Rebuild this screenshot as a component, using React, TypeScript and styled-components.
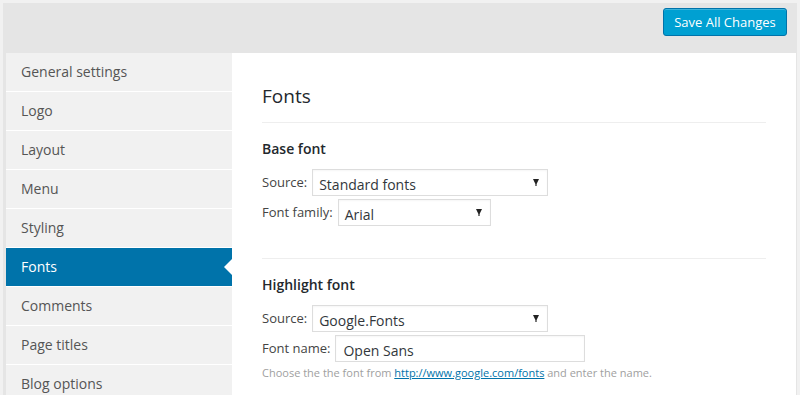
import React from "react";
import styled, { createGlobalStyle } from "styled-components";

const Global = createGlobalStyle`
  html, body { margin: 0; padding: 0; background: #f1f1f1; }
  body { font-family: "Open Sans", "Noto Sans", sans-serif; color: #444; }
  * { box-sizing: border-box; }
`;

const Frame = styled.div`
  margin: 3px 0 0 3px;
  width: 794px;
  background: #e5e5e5;
  display: flex;
  flex-direction: column;
`;

const TopBar = styled.div`
  height: 50px;
  display: flex;
  justify-content: flex-end;
  align-items: flex-start;
  padding: 5px 10px 0 0;
`;

const SaveButton = styled.button`
  height: 28px;
  width: 124px;
  padding: 0;
  background: #00a0d2;
  border: 1px solid #0073aa;
  border-radius: 3px;
  color: #fff;
  font-family: "Open Sans", sans-serif;
  font-size: 13px;
  line-height: 26px;
  box-shadow: inset 0 1px 0 rgba(120, 200, 230, 0.5);
  cursor: pointer;
`;

const Body = styled.div`
  display: flex;
  padding-left: 3px;
  padding-right: 1px;
  height: 342px;
`;

const Sidebar = styled.nav`
  width: 226px;
  background: #f1f1f1;
  display: flex;
  flex-direction: column;
`;

const NavItem = styled.div<{ $active?: boolean }>`
  position: relative;
  height: 39px;
  line-height: 38px;
  padding-left: 15px;
  font-size: 14px;
  border-bottom: 1px solid #fff;
  color: ${(p) => (p.$active ? "#fff" : "#555")};
  background: ${(p) => (p.$active ? "#0073aa" : "#f1f1f1")};
  ${(p) =>
    p.$active &&
    `
    &::after {
      content: "";
      position: absolute;
      right: 0;
      top: 11px;
      border-style: solid;
      border-width: 8px 8px 8px 0;
      border-color: transparent #fff transparent transparent;
    }
  `}
`;

const Content = styled.main`
  flex: 1;
  background: #fff;
  padding: 30px 30px 0 30px;
  overflow: hidden;
`;

const Title = styled.h2`
  margin: 0;
  font-size: 19px;
  font-weight: 400;
  line-height: 27px;
  color: #23282d;
  padding-bottom: 12px;
  border-bottom: 1px solid #eee;
`;

const Section = styled.section<{ $last?: boolean }>`
  padding: 16px 0 ${(p) => (p.$last ? "0" : "29px")};
  border-bottom: ${(p) => (p.$last ? "none" : "1px solid #eee")};
`;

const SectionTitle = styled.h3`
  margin: 0 0 11px;
  font-size: 14px;
  font-weight: 600;
  line-height: 19px;
  color: #23282d;
`;

const Row = styled.div`
  display: flex;
  align-items: flex-start;
  gap: 5px;
  margin-bottom: 3px;
`;

const Label = styled.label`
  font-size: 13px;
  line-height: 18px;
  padding-top: 4px;
  color: #444;
`;

const SelectBox = styled.div<{ $w: number }>`
  width: ${(p) => p.$w}px;
  height: 27px;
  border: 1px solid #ddd;
  display: flex;
  align-items: center;
  justify-content: space-between;
  padding: 0 8px 0 6px;
  font-size: 14px;
  color: #32373c;
  background: #fff;
  box-shadow: inset 0 1px 2px rgba(0, 0, 0, 0.04);
`;

const SelectText = styled.span`
  padding-top: 3px;
`;

const Arrow = styled.svg`
  width: 6px;
  height: 7px;
  display: block;
`;

const TextInput = styled.div`
  width: 250px;
  height: 27px;
  border: 1px solid #ddd;
  display: flex;
  align-items: center;
  padding: 3px 7px 0;
  font-size: 14px;
  color: #32373c;
  box-shadow: inset 0 1px 2px rgba(0, 0, 0, 0.04);
`;

const Hint = styled.p`
  margin: 2px 0 0;
  font-size: 11px;
  line-height: 15px;
  color: #a0a0a0;
`;

const Link = styled.a`
  color: #0073aa;
  text-decoration: underline;
`;

const Select = ({ w, value }: { w: number; value: string }) => (
  <SelectBox $w={w}>
    <SelectText>{value}</SelectText>
    <Arrow viewBox="0 0 6 7">
      <path d="M0 0 H6 L3.6 5 V7 H2.4 V5 Z" fill="#222" />
    </Arrow>
  </SelectBox>
);

const items = [
  "General settings",
  "Logo",
  "Layout",
  "Menu",
  "Styling",
  "Fonts",
  "Comments",
  "Page titles",
  "Blog options",
];

export default function App() {
  return (
    <>
      <Global />
      <Frame>
        <TopBar>
          <SaveButton>Save All Changes</SaveButton>
        </TopBar>
        <Body>
          <Sidebar>
            {items.map((it) => (
              <NavItem key={it} $active={it === "Fonts"}>
                {it}
              </NavItem>
            ))}
          </Sidebar>
          <Content>
            <Title>Fonts</Title>
            <Section>
              <SectionTitle>Base font</SectionTitle>
              <Row>
                <Label>Source:</Label>
                <Select w={236} value="Standard fonts" />
              </Row>
              <Row>
                <Label>Font family:</Label>
                <Select w={153} value="Arial" />
              </Row>
            </Section>
            <Section $last>
              <SectionTitle>Highlight font</SectionTitle>
              <Row>
                <Label>Source:</Label>
                <Select w={236} value="Google.Fonts" />
              </Row>
              <Row>
                <Label>Font name:</Label>
                <TextInput>Open Sans</TextInput>
              </Row>
              <Hint>
                Choose the the font from{" "}
                <Link href="#">http://www.google.com/fonts</Link> and enter the name.
              </Hint>
            </Section>
          </Content>
        </Body>
      </Frame>
    </>
  );
}
